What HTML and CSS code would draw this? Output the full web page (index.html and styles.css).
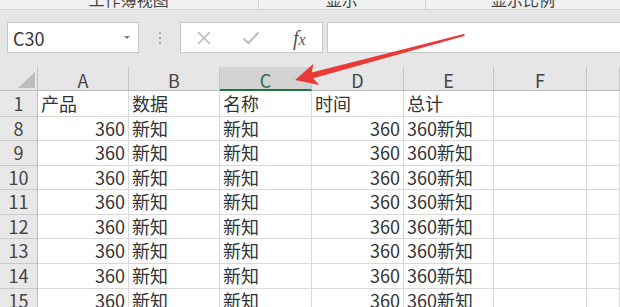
FILE: index.html
```html
<!DOCTYPE html>
<html lang="zh">
<head>
<meta charset="utf-8">
<link rel="stylesheet" href="styles.css">
</head>
<body>
<div class="app">
  <div class="ribbon">
    <div class="rgroup g1"><span>工作簿视图</span></div>
    <div class="rgroup g2"><span>显示</span></div>
    <div class="rgroup g3"><span>显示比例</span></div>
  </div>
  <div class="fbar">
    <div class="namebox"><span class="ref">C30</span><span class="caret"></span></div>
    <div class="dots"><i></i><i></i><i></i></div>
    <div class="fbtns">
      <svg class="ico-x" width="16" height="16" viewBox="0 0 16 16"><path d="M2 2 L14 14 M14 2 L2 14" stroke="#b9b9b9" stroke-width="1.6" fill="none"/></svg>
      <svg class="ico-ok" width="18" height="14" viewBox="0 0 18 14"><path d="M1.5 7.5 L6.5 12 L16.5 1.5" stroke="#bdbdbd" stroke-width="2" fill="none"/></svg>
      <span class="fx">f<span class="fxx">x</span></span>
    </div>
    <div class="finput"></div>
  </div>
  <div class="sheet">
    <div class="row hdr">
      <div class="c corner"><span class="tri"></span></div>
      <div class="c">A</div><div class="c">B</div><div class="c sel">C</div><div class="c">D</div><div class="c">E</div><div class="c">F</div><div class="c"></div>
    </div>
    <div class="row r1">
      <div class="c rh">1</div>
      <div class="c">产品</div><div class="c">数据</div><div class="c">名称</div><div class="c">时间</div><div class="c">总计</div><div class="c"></div><div class="c"></div>
    </div>
    <div class="row"><div class="c rh">8</div><div class="c num">360</div><div class="c">新知</div><div class="c">新知</div><div class="c num">360</div><div class="c">360新知</div><div class="c"></div><div class="c"></div></div>
    <div class="row"><div class="c rh">9</div><div class="c num">360</div><div class="c">新知</div><div class="c">新知</div><div class="c num">360</div><div class="c">360新知</div><div class="c"></div><div class="c"></div></div>
    <div class="row"><div class="c rh">10</div><div class="c num">360</div><div class="c">新知</div><div class="c">新知</div><div class="c num">360</div><div class="c">360新知</div><div class="c"></div><div class="c"></div></div>
    <div class="row"><div class="c rh">11</div><div class="c num">360</div><div class="c">新知</div><div class="c">新知</div><div class="c num">360</div><div class="c">360新知</div><div class="c"></div><div class="c"></div></div>
    <div class="row"><div class="c rh">12</div><div class="c num">360</div><div class="c">新知</div><div class="c">新知</div><div class="c num">360</div><div class="c">360新知</div><div class="c"></div><div class="c"></div></div>
    <div class="row"><div class="c rh">13</div><div class="c num">360</div><div class="c">新知</div><div class="c">新知</div><div class="c num">360</div><div class="c">360新知</div><div class="c"></div><div class="c"></div></div>
    <div class="row"><div class="c rh">14</div><div class="c num">360</div><div class="c">新知</div><div class="c">新知</div><div class="c num">360</div><div class="c">360新知</div><div class="c"></div><div class="c"></div></div>
    <div class="row"><div class="c rh">15</div><div class="c num">360</div><div class="c">新知</div><div class="c">新知</div><div class="c num">360</div><div class="c">360新知</div><div class="c"></div><div class="c"></div></div>
  </div>
  <svg class="arrow" width="620" height="307" viewBox="0 0 620 307">
    <polygon fill="#ea3a36" points="295,80 313.5,63.7 311.6,72.5 463.8,34 465,35 464.2,36 313.2,78.3 319.1,85"/>
  </svg>
</div>
</body>
</html>
```
FILE: styles.css
```css
* { box-sizing: border-box; }
html, body { margin: 0; padding: 0; }
body {
  width: 620px;
  height: 307px;
  overflow: hidden;
  background: #fff;
  font-family: "Noto Sans CJK SC", "Noto Sans", sans-serif;
  color: #333;
}
.app { position: relative; width: 620px; height: 307px; overflow: hidden; }

.ribbon {
  height: 10px;
  display: flex;
  background: #f1f1f1;
  border-bottom: 1px solid #d6d6d6;
  overflow: hidden;
}
.rgroup {
  display: flex;
  justify-content: center;
  font-size: 16px;
  line-height: 16px;
  color: #444;
}
.rgroup span { margin-top: -9px; }
.g1 { width: 261px; border-right: 1px solid #d0d0d0; }
.g2 { width: 169px; border-right: 1px solid #d0d0d0; }
.g3 { width: 196px; }

.fbar {
  height: 57px;
  background: #e6e6e6;
  display: flex;
  align-items: flex-start;
  padding: 12px 0 0 7px;
}
.namebox {
  width: 132px;
  height: 31px;
  background: #fff;
  border: 1px solid #c9c9c9;
  display: flex;
  align-items: center;
  justify-content: space-between;
  padding: 0 8px 0 5px;
}
.ref { font-size: 18px; color: #333; line-height: 1; }
.caret {
  width: 0; height: 0;
  border-left: 3px solid transparent;
  border-right: 3px solid transparent;
  border-top: 3px solid #7a7a7a;
}
.dots {
  width: 41px;
  height: 31px;
  display: flex;
  flex-direction: column;
  align-items: center;
  justify-content: center;
  gap: 3px;
}
.dots i { display: block; width: 2px; height: 2px; background: #a8a8a8; }
.fbtns {
  width: 143px;
  height: 31px;
  background: #fff;
  border: 1px solid #c9c9c9;
  display: flex;
  align-items: center;
  padding-left: 15px;
}
.ico-x { margin-right: 30px; }
.ico-ok { margin-right: 33px; }
.fx {
  font-family: "Liberation Serif", serif;
  font-style: italic;
  font-size: 20px;
  color: #555;
  line-height: 1;
}
.fxx { font-size: 16px; }
.finput {
  flex: 1;
  height: 31px;
  margin-left: 4px;
  background: #fff;
  border: 1px solid #c9c9c9;
  border-right: none;
}

.sheet { display: flex; flex-direction: column; }
.row {
  display: grid;
  grid-template-columns: 38px 91px 91px 92px 92px 90px 93px 1fr;
  height: 24.6px;
}
.c {
  border-right: 1px solid #d9d9d9;
  border-bottom: 1px solid #d9d9d9;
  font-size: 18px;
  line-height: 23px;
  padding: 0 3px;
  white-space: nowrap;
  overflow: hidden;
  color: #333;
}
.num { text-align: right; padding-right: 3px; }
.rh {
  background: #e8e8e8;
  border-right: 1px solid #bdbdbd;
  border-bottom: 1px solid #c9c9c9;
  text-align: center;
  color: #444;
  padding: 0;
}
.hdr { height: 24px; }
.hdr .c {
  background: #e6e6e6;
  border-right: 1px solid #c6c6c6;
  border-bottom: 1px solid #bdbdbd;
  text-align: center;
  color: #444;
  line-height: 26px;
}
.hdr .sel {
  background: #d3d3d3;
  border-bottom: 2px solid #217346;
  color: #2b7150;
}
.hdr .corner { position: relative; border-right: 1px solid #bdbdbd; }
.tri {
  position: absolute;
  right: 2px;
  bottom: 2px;
  width: 0; height: 0;
  border-left: 17px solid transparent;
  border-bottom: 16px solid #bcbcbc;
}
.r1 { height: 25.5px; }
.r1 .c { line-height: 25px; }

.arrow { position: absolute; left: 0; top: 0; pointer-events: none; }
```
